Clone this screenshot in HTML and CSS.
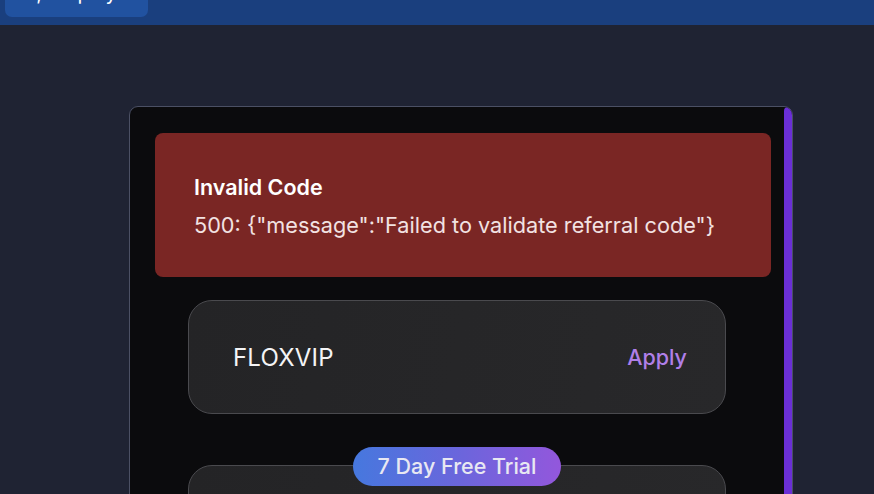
FILE: index.html
```html
<!DOCTYPE html>
<html lang="en">
<head>
<meta charset="utf-8">
<title>Referral code</title>
<link rel="stylesheet" href="styles.css">
</head>
<body>
  <header class="topbar">
    <button class="top-btn"><span class="top-btn-label"><span class="top-icon">,</span> Display</span></button>
  </header>
  <main class="stage">
    <section class="modal">
      <div class="modal-content">
        <div class="toast">
          <div class="toast-title">Invalid Code</div>
          <div class="toast-msg">500: {"message":"Failed to validate referral code"}</div>
        </div>
        <div class="code-box">
          <span class="code-value">FLOXVIP</span>
          <span class="code-apply">Apply</span>
        </div>
        <div class="plan-box">
          <span class="plan-badge">7 Day Free Trial</span>
        </div>
      </div>
      <div class="scrollbar"></div>
    </section>
  </main>
</body>
</html>
```
FILE: styles.css
```css
html, body {
  margin: 0;
  padding: 0;
}
body {
  width: 874px;
  height: 494px;
  overflow: hidden;
  background: #1f2333;
  font-family: Inter, "Noto Sans", sans-serif;
}
.topbar {
  height: 25px;
  background: #1a3f7e;
  padding-left: 5px;
  display: flex;
  align-items: flex-start;
}
.top-btn {
  width: 143px;
  height: 17px;
  border: none;
  border-radius: 0 0 7px 7px;
  background: #2152a0;
  color: #ffffff;
  font-family: Inter, sans-serif;
  font-size: 20px;
  padding: 0 0 14px 0;
  display: flex;
  align-items: flex-end;
  justify-content: center;
}
.top-btn-label {
  line-height: 20px;
  white-space: nowrap;
}
.stage {
  padding: 81px 0 0 129px;
}
.modal {
  width: 662px;
  height: 420px;
  border: 1px solid #4b5064;
  border-radius: 9px;
  background: #0b0b0d;
  display: flex;
  overflow: hidden;
}
.modal-content {
  flex: 1;
  padding: 26px 0 0 0;
  display: flex;
  flex-direction: column;
  align-items: center;
}
.scrollbar {
  width: 8px;
  background: #6a2fd6;
  border-radius: 4px 4px 0 0;
}
.toast {
  flex-shrink: 0;
  align-self: flex-start;
  margin-left: 25px;
  width: 616px;
  height: 144px;
  box-sizing: border-box;
  background: #7a2624;
  border-radius: 8px;
  padding: 41px 0 0 39px;
  color: #ffffff;
}
.toast-title {
  font-size: 21.5px;
  font-weight: 600;
  line-height: 26px;
}
.toast-msg {
  margin-top: 11px;
  font-size: 21.7px;
  line-height: 28px;
  color: #f2e2e2;
}
.code-box {
  flex-shrink: 0;
  margin-top: 23px;
  width: 538px;
  height: 114px;
  box-sizing: border-box;
  border: 1px solid #4a4a4e;
  border-radius: 24px;
  background: linear-gradient(100deg, #242426 0%, #28282a 100%);
  display: flex;
  align-items: center;
  justify-content: space-between;
  padding: 0 38px 0 44px;
}
.code-value {
  font-size: 24px;
  color: #f4f4f6;
  letter-spacing: 0.2px;
}
.code-apply {
  font-size: 21.5px;
  color: #b07fe8;
  font-weight: 500;
}
.plan-box {
  flex-shrink: 0;
  margin-top: 51px;
  width: 538px;
  height: 114px;
  box-sizing: border-box;
  border: 1px solid #4a4a4e;
  border-radius: 24px;
  background: linear-gradient(100deg, #242426 0%, #28282a 100%);
  display: flex;
  justify-content: center;
}
.plan-badge {
  margin-top: -19px;
  height: 39px;
  box-sizing: border-box;
  padding: 0 25px;
  border-radius: 20px;
  background: linear-gradient(90deg, #4678de 0%, #6a66dc 50%, #9357dc 100%);
  color: #e8e8f2;
  font-size: 21.5px;
  font-weight: 500;
  line-height: 39px;
  white-space: nowrap;
}
```
